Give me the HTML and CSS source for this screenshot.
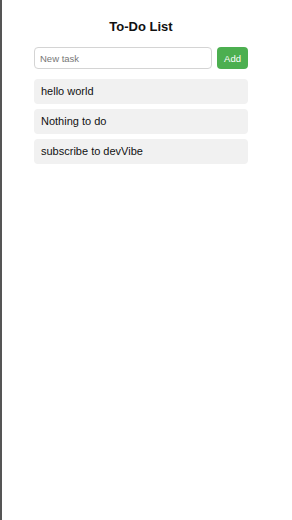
FILE: index.html
```html
<!DOCTYPE html>
<html lang="en">
<head>
  <meta charset="UTF-8">
  <title>To-Do List</title>
  <meta name="viewport" content="width=device-width, initial-scale=1">
  <link rel="stylesheet" href="styles.css">
</head>
<body>
  <div class="container">
    <h2>To-Do List</h2>
    <div class="add-row">
      <input type="text" id="taskInput" placeholder="New task">
      <button id="addBtn">Add</button>
    </div>
    <ul id="taskList">
      <li>hello world</li>
      <li>Nothing to do</li>
      <li>subscribe to devVibe</li>
    </ul>
  </div>
</body>
</html>
```

FILE: styles.css
```css
html {
  height: 100%;
}

body {
  font-family: 'Liberation Sans', Arial, sans-serif;
  margin: 0;
  min-height: 100%;
  background: #fff;
  color: #111;
  border-left: 2px solid #555;
  box-sizing: border-box;
  padding-right: 12px;
}

.container {
  width: 214px;
  margin: 0 auto;
  padding-top: 19px;
}

h2 {
  margin: 0 0 13px;
  font-size: 13px;
  text-align: center;
}

.add-row {
  display: flex;
  gap: 5px;
  margin-bottom: 10px;
}

.add-row input {
  flex: 1;
  min-width: 0;
  height: 22px;
  box-sizing: border-box;
  padding: 0 5px;
  border: 1px solid #d4d4d4;
  border-radius: 4px;
  font-family: inherit;
  font-size: 9.5px;
}

.add-row input::placeholder {
  color: #777;
}

.add-row button {
  width: 31px;
  height: 22px;
  border: none;
  border-radius: 4px;
  background: #4caf50;
  color: #fff;
  font-family: inherit;
  font-size: 9.5px;
  padding: 0;
}

ul {
  list-style: none;
  margin: 0;
  padding: 0;
}

li {
  background: #f1f1f1;
  border-radius: 4px;
  height: 25px;
  line-height: 25px;
  padding: 0 7px;
  margin-bottom: 5px;
  font-size: 11px;
}
```
